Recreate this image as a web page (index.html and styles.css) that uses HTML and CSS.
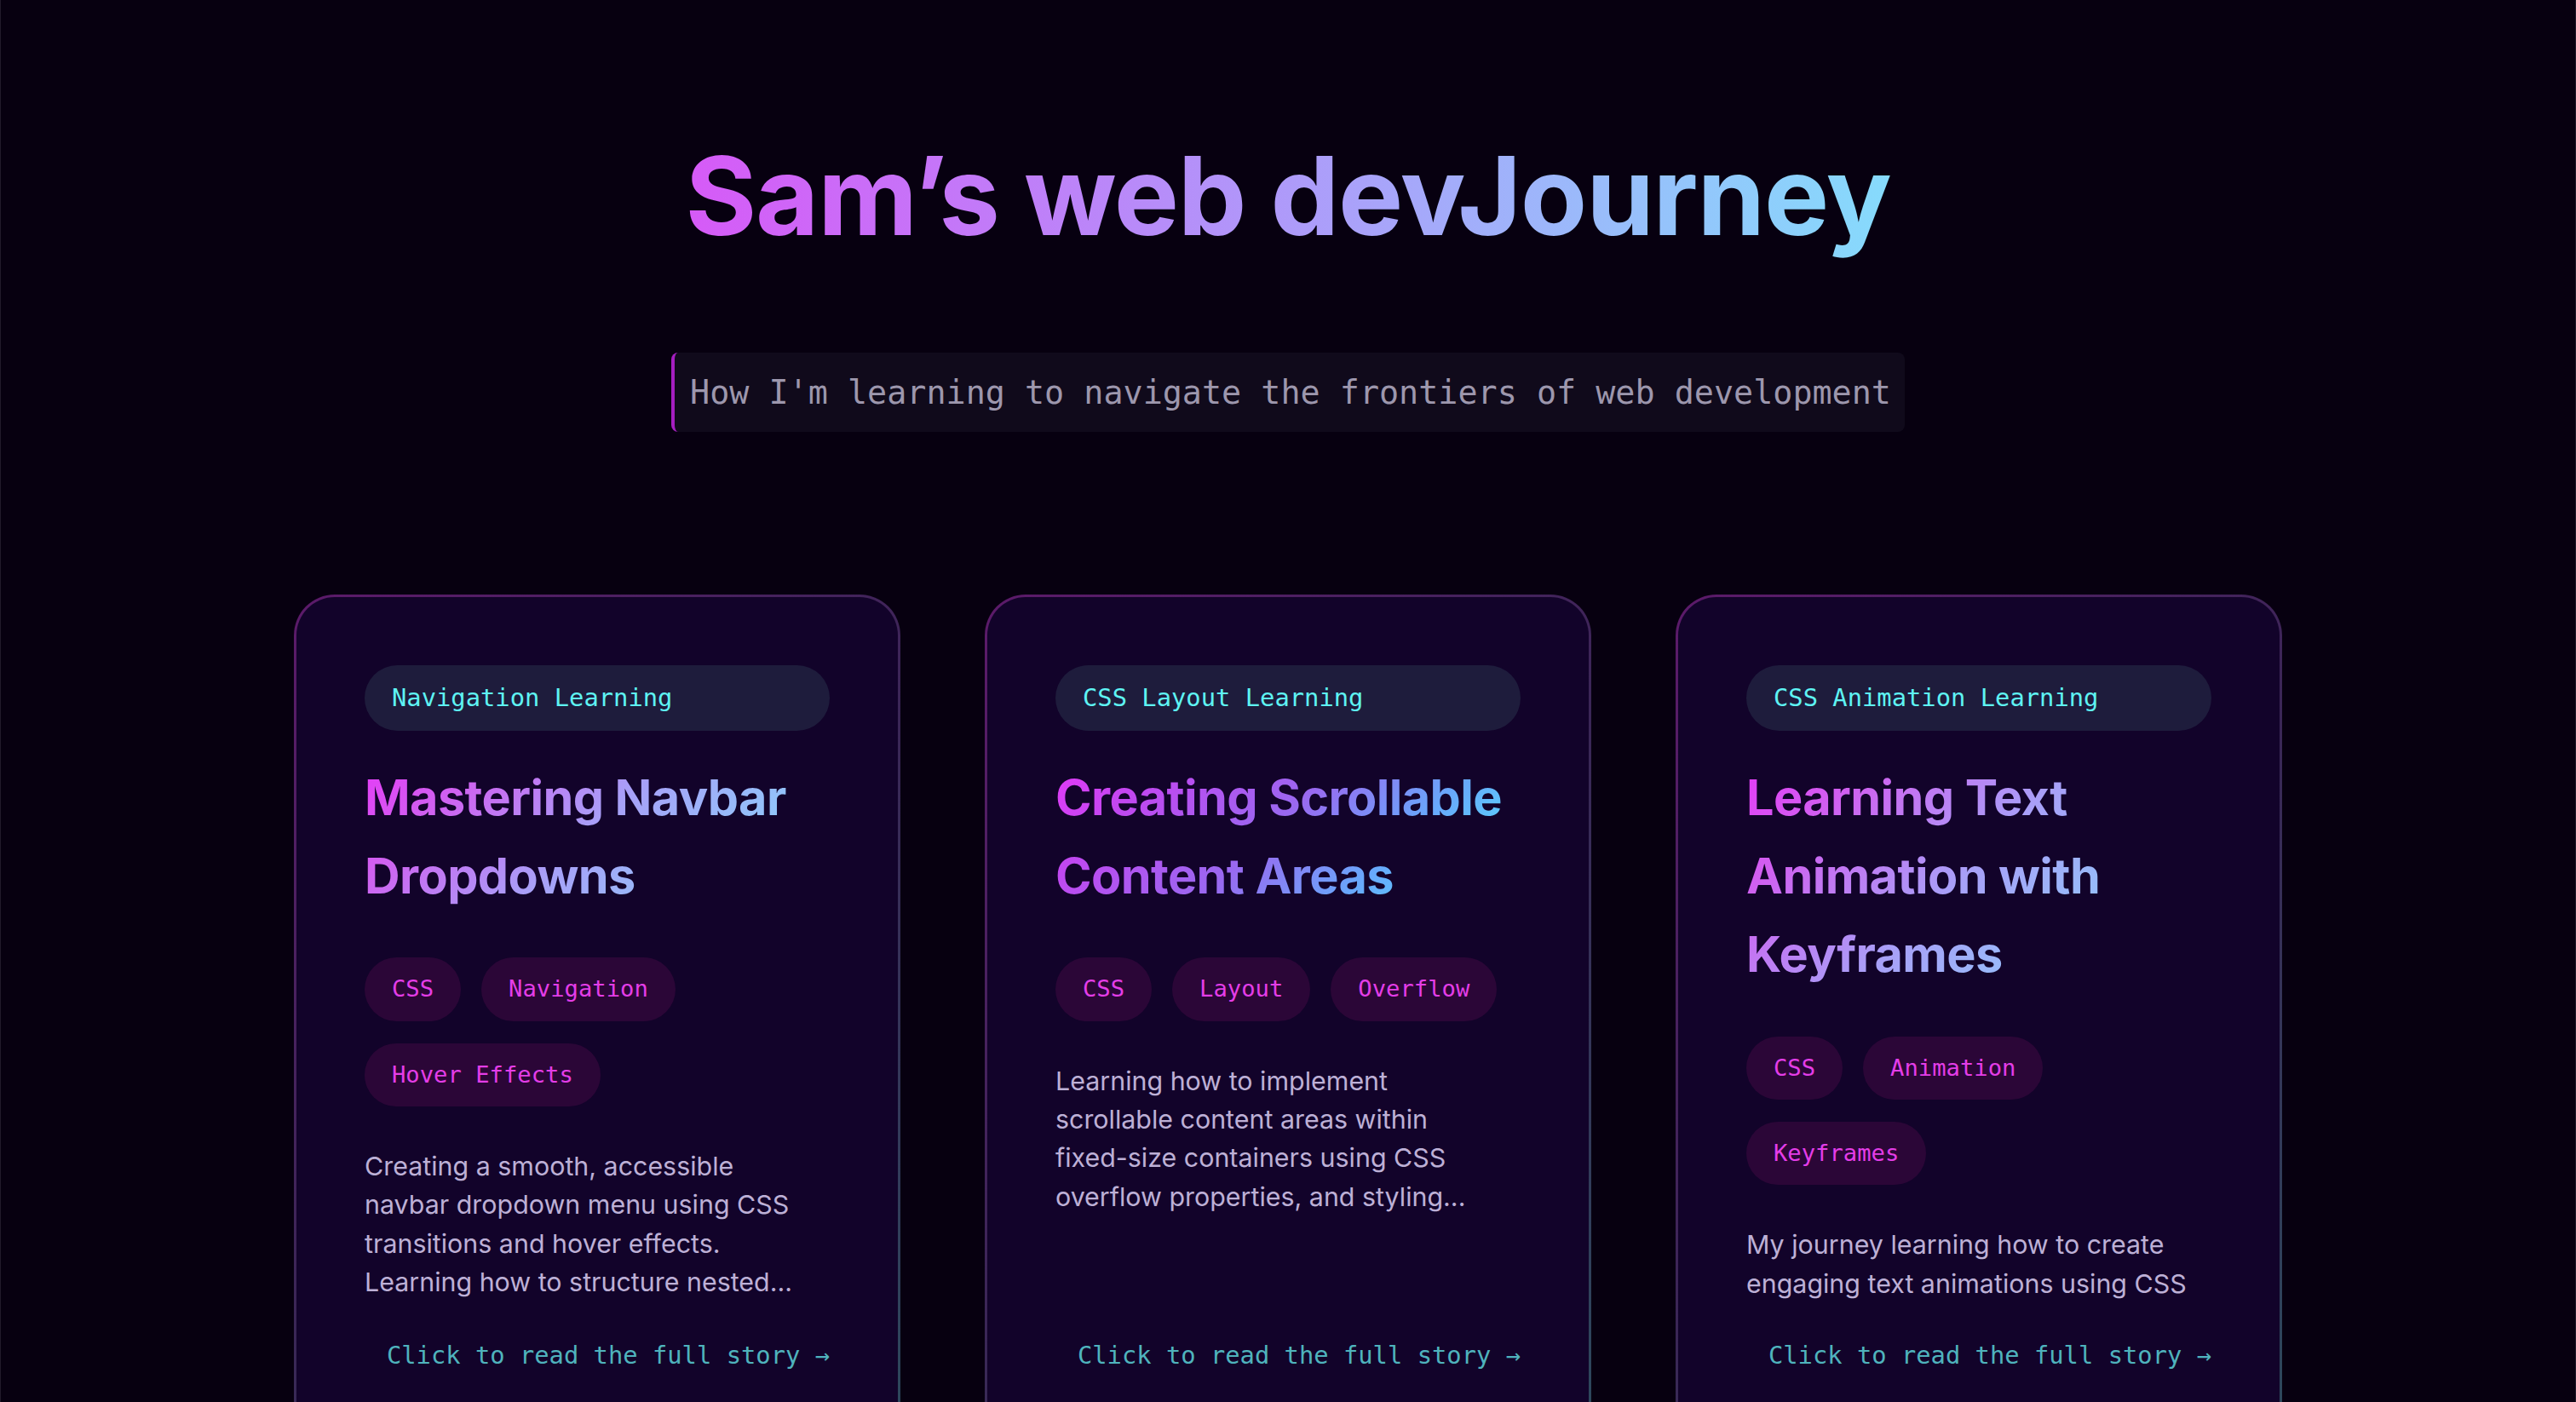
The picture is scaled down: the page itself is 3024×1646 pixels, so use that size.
FILE: index.html
```html
<!DOCTYPE html>
<html lang="en">
<head>
<meta charset="utf-8">
<title>Sam’s web devJourney</title>
<link rel="stylesheet" href="styles.css">
</head>
<body>
<div class="page">
  <header class="hero">
    <h1 class="hero-title">Sam’s web devJourney</h1>
    <p class="hero-sub">How I'm learning to navigate the frontiers of web development</p>
  </header>

  <main class="cards">
    <article class="card">
      <span class="card-cat">Navigation Learning</span>
      <h2 class="card-title card-title--soft">Mastering Navbar<br>Dropdowns</h2>
      <ul class="tags">
        <li class="tag">CSS</li>
        <li class="tag">Navigation</li>
        <li class="tag">Hover Effects</li>
      </ul>
      <p class="card-desc">Creating a smooth, accessible<br>navbar dropdown menu using CSS<br>transitions and hover effects.<br>Learning how to structure nested...</p>
      <a class="card-link" href="#">Click to read the full story →</a>
    </article>

    <article class="card">
      <span class="card-cat">CSS Layout Learning</span>
      <h2 class="card-title card-title--vivid">Creating Scrollable<br>Content Areas</h2>
      <ul class="tags">
        <li class="tag">CSS</li>
        <li class="tag">Layout</li>
        <li class="tag">Overflow</li>
      </ul>
      <p class="card-desc">Learning how to implement<br>scrollable content areas within<br>fixed-size containers using CSS<br>overflow properties, and styling...</p>
      <a class="card-link" href="#">Click to read the full story →</a>
    </article>

    <article class="card">
      <span class="card-cat">CSS Animation Learning</span>
      <h2 class="card-title card-title--soft">Learning Text<br>Animation with<br>Keyframes</h2>
      <ul class="tags">
        <li class="tag">CSS</li>
        <li class="tag">Animation</li>
        <li class="tag">Keyframes</li>
      </ul>
      <p class="card-desc">My journey learning how to create<br>engaging text animations using CSS</p>
      <a class="card-link" href="#">Click to read the full story →</a>
    </article>
  </main>
</div>
</body>
</html>
```

FILE: styles.css
```css
html,
body {
  margin: 0;
  background: #070010;
}

body {
  font-family: Inter, "Noto Sans", sans-serif;
  color: #bdb0d6;
}

.page {
  min-height: 100vh;
  box-sizing: border-box;
  border-left: 1px solid #211b2b;
  border-right: 1px solid #211b2b;
  padding-bottom: 120px;
}

.hero {
  display: flex;
  flex-direction: column;
  align-items: center;
  padding-top: 153px;
}

.hero-title {
  margin: 0;
  font-size: 128px;
  line-height: 153.6px;
  font-weight: 700;
  letter-spacing: -1.2px;
  background: linear-gradient(90deg, #d65af7, #86dbfc);
  -webkit-background-clip: text;
  background-clip: text;
  color: transparent;
}

.hero-sub {
  margin: 107px 0 0;
  padding: 16px 16px 16px 18px;
  font-family: "DejaVu Sans Mono", "Liberation Mono", monospace;
  font-size: 38.4px;
  line-height: 61.4px;
  color: #9d97ad;
  background: #100a1b;
  border-left: 4px solid #a51ec0;
  border-radius: 8px;
}

.cards {
  display: grid;
  grid-template-columns: repeat(3, 712px);
  column-gap: 99px;
  justify-content: center;
  align-items: stretch;
  margin-top: 191px;
}

.card {
  display: flex;
  flex-direction: column;
  padding: 80px;
  border: 3px solid transparent;
  border-radius: 48px;
  background:
    linear-gradient(#12032a, #12032a) padding-box,
    linear-gradient(135deg, #5c1a6a 0%, #3a2656 50%, #2c4a5c 100%) border-box;
}

.card-cat {
  display: block;
  margin-bottom: 32px;
  padding: 16px 32px;
  font-family: "DejaVu Sans Mono", "Liberation Mono", monospace;
  font-size: 28.8px;
  line-height: 45px;
  color: #5ef3f3;
  background: #1e1c3c;
  border-radius: 999px;
}

.card-title {
  margin: 0 0 50px;
  font-size: 57.6px;
  line-height: 92.2px;
  font-weight: 700;
  letter-spacing: -0.6px;
  -webkit-background-clip: text;
  background-clip: text;
  color: transparent;
}

.card-title--soft {
  background-image: linear-gradient(135deg, #e639f8 0%, #d060f0 19%, #a8a0f8 48%, #8ecbfa 80%, #8ecbfa 100%);
}

.card-title--vivid {
  background-image: linear-gradient(135deg, #e639f8 0%, #c048f0 19%, #9a68f0 46%, #68a8fb 69%, #5fc5fc 80%, #5fc5fc 100%);
}

.tags {
  display: flex;
  flex-wrap: wrap;
  gap: 25.6px 24px;
  margin: 0 0 48px;
  padding: 0;
  list-style: none;
}

.tag {
  padding: 16px 32px;
  font-family: "DejaVu Sans Mono", "Liberation Mono", monospace;
  font-size: 27.2px;
  line-height: 42.6px;
  color: #e43de8;
  background: #2b0637;
  border-radius: 999px;
}

.card-desc {
  margin: 0 0 22px;
  font-size: 30.4px;
  line-height: 45.2px;
  color: #bdb0d6;
}

.card-link {
  margin-top: auto;
  padding: 16px 0;
  text-align: right;
  font-family: "DejaVu Sans Mono", "Liberation Mono", monospace;
  font-size: 28.8px;
  line-height: 46px;
  color: #4fb3bd;
  text-decoration: none;
}
```
